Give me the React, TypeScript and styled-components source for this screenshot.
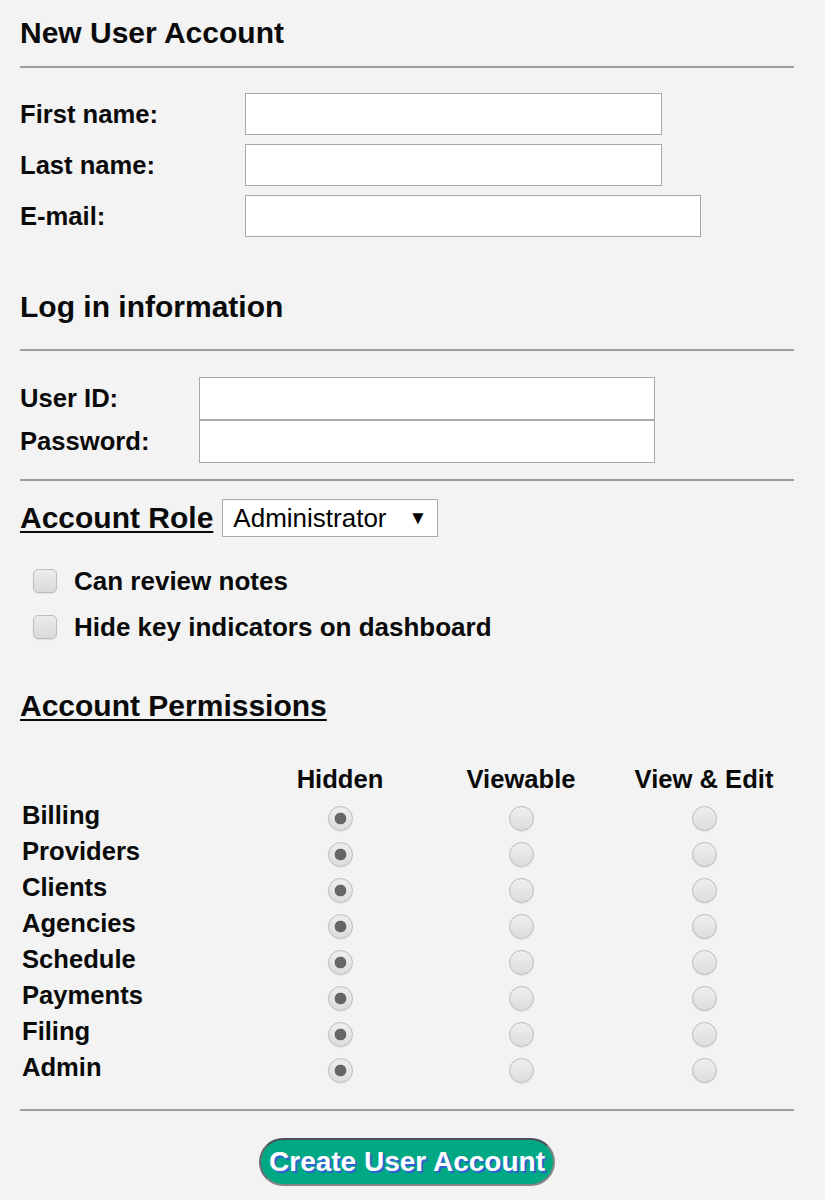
import { Fragment } from "react";
import styled, { createGlobalStyle } from "styled-components";

const GlobalStyle = createGlobalStyle`
  html, body {
    margin: 0;
    padding: 0;
    background: #f3f3f3;
  }
  body {
    font-family: "Liberation Sans", Arial, sans-serif;
    color: #0a0a0a;
  }
`;

const Page = styled.div`
  width: 774px;
  margin-left: 20px;
  display: flex;
  flex-direction: column;
`;

const Heading = styled.h2<{ $top: number }>`
  margin: ${(p) => p.$top}px 0 0;
  font-size: 30px;
  line-height: 34px;
  font-weight: bold;
`;

const UnderlinedTitle = styled.h3`
  margin: 0;
  font-size: 30px;
  line-height: 34px;
  font-weight: bold;
  text-decoration: underline;
  text-underline-offset: 3px;
  text-decoration-thickness: 2px;
  white-space: nowrap;
`;

const Rule = styled.div<{ $top: number }>`
  height: 2px;
  margin-top: ${(p) => p.$top}px;
  background: #9d9d9d;
`;

const FieldGroup = styled.div<{ $top: number; $gap: number }>`
  margin-top: ${(p) => p.$top}px;
  display: flex;
  flex-direction: column;
  gap: ${(p) => p.$gap}px;
`;

const FieldRow = styled.div<{ $labelWidth: number }>`
  display: grid;
  grid-template-columns: ${(p) => p.$labelWidth}px auto;
  align-items: center;
  justify-content: start;
`;

const Label = styled.label`
  font-size: 25.6px;
  font-weight: bold;
`;

const TextInput = styled.input<{ $w: number; $h: number }>`
  box-sizing: border-box;
  width: ${(p) => p.$w}px;
  height: ${(p) => p.$h}px;
  border: 1px solid #a9a9a9;
  background: #fff;
  margin: 0;
  padding: 0 8px;
  font-family: "Liberation Sans", Arial, sans-serif;
  font-size: 22px;
  outline: none;
`;

const RoleRow = styled.div`
  margin-top: 18px;
  display: flex;
  align-items: center;
  gap: 9px;
`;

const SelectWrap = styled.div`
  position: relative;
  width: 216px;
  height: 38px;
`;

const Select = styled.select`
  appearance: none;
  box-sizing: border-box;
  width: 100%;
  height: 100%;
  border: 1px solid #a9a9a9;
  border-radius: 0;
  background: #fff;
  padding: 0 0 0 10px;
  font-family: "Liberation Sans", Arial, sans-serif;
  font-size: 26px;
  color: #000;
  outline: none;
`;

const SelectArrow = styled.span`
  position: absolute;
  right: 11px;
  top: 50%;
  transform: translateY(-50%);
  font-size: 19px;
  pointer-events: none;
  color: #000;
`;

const CheckList = styled.div`
  margin-top: 21px;
  display: flex;
  flex-direction: column;
`;

const CheckRow = styled.label`
  height: 46px;
  display: flex;
  align-items: center;
  gap: 17px;
  padding-left: 13px;
  font-size: 26px;
  font-weight: bold;
`;

const Checkbox = styled.input`
  appearance: none;
  margin: 0;
  width: 24px;
  height: 24px;
  border: 1px solid #bdbdbd;
  border-radius: 5px;
  background: linear-gradient(#ececec, #dadada);
  box-shadow: 0 1px 1px rgba(0, 0, 0, 0.08);
`;

const PermTitleWrap = styled.div`
  margin-top: 39px;
  display: flex;
`;

const PermGrid = styled.div`
  margin: 38px 0 0 2px;
  display: grid;
  grid-template-columns: 228px 180px 182px 184px;
  grid-auto-rows: 36px;
`;

const ColHead = styled.div`
  display: flex;
  align-items: center;
  justify-content: center;
  font-size: 25.6px;
  font-weight: bold;
  white-space: nowrap;
`;

const RowLabel = styled.div`
  display: flex;
  align-items: center;
  font-size: 25.6px;
  font-weight: bold;
`;

const RadioCell = styled.div`
  display: flex;
  justify-content: center;
  padding-top: 9px;
`;

const Radio = styled.input`
  appearance: none;
  margin: 0;
  width: 25px;
  height: 25px;
  border-radius: 50%;
  border: 1px solid #bcbcbc;
  background: linear-gradient(#eeeeee, #dddddd);
  box-shadow: 0 1px 1px rgba(0, 0, 0, 0.06);

  &:checked {
    background: radial-gradient(circle, #666 0 5.5px, transparent 6.2px),
      linear-gradient(#eeeeee, #dddddd);
  }
`;

const ButtonRow = styled.div`
  margin-top: 27px;
  display: flex;
  justify-content: center;
`;

const CreateButton = styled.button`
  box-sizing: border-box;
  height: 48px;
  padding: 0 8px;
  border: 2px solid #858585;
  border-top-color: #4b4f5c;
  border-left-color: #6a6a70;
  border-radius: 24px;
  background: #00a884;
  color: #fff;
  font-family: "Liberation Sans", Arial, sans-serif;
  font-size: 28px;
  font-weight: bold;
  text-shadow: 2px 2px 0 #2d62d4;
  cursor: pointer;
`;

const sections = [
  "Billing",
  "Providers",
  "Clients",
  "Agencies",
  "Schedule",
  "Payments",
  "Filing",
  "Admin",
];

const levels = ["Hidden", "Viewable", "View & Edit"];

export default function App() {
  return (
    <>
      <GlobalStyle />
      <Page>
        <Heading $top={16}>New User Account</Heading>
        <Rule $top={16} />

        <FieldGroup $top={25} $gap={9}>
          <FieldRow $labelWidth={225}>
            <Label>First name:</Label>
            <TextInput $w={417} $h={42} />
          </FieldRow>
          <FieldRow $labelWidth={225}>
            <Label>Last name:</Label>
            <TextInput $w={417} $h={42} />
          </FieldRow>
          <FieldRow $labelWidth={225}>
            <Label>E-mail:</Label>
            <TextInput $w={456} $h={42} />
          </FieldRow>
        </FieldGroup>

        <Heading $top={53}>Log in information</Heading>
        <Rule $top={25} />

        <FieldGroup $top={26} $gap={0}>
          <FieldRow $labelWidth={179}>
            <Label>User ID:</Label>
            <TextInput $w={456} $h={43} />
          </FieldRow>
          <FieldRow $labelWidth={179}>
            <Label>Password:</Label>
            <TextInput $w={456} $h={43} type="password" />
          </FieldRow>
        </FieldGroup>

        <Rule $top={16} />

        <RoleRow>
          <UnderlinedTitle>Account Role</UnderlinedTitle>
          <SelectWrap>
            <Select defaultValue="admin">
              <option value="admin">Administrator</option>
              <option value="staff">Staff</option>
            </Select>
            <SelectArrow>▼</SelectArrow>
          </SelectWrap>
        </RoleRow>

        <CheckList>
          <CheckRow>
            <Checkbox type="checkbox" />
            Can review notes
          </CheckRow>
          <CheckRow>
            <Checkbox type="checkbox" />
            Hide key indicators on dashboard
          </CheckRow>
        </CheckList>

        <PermTitleWrap>
          <UnderlinedTitle>Account Permissions</UnderlinedTitle>
        </PermTitleWrap>

        <PermGrid>
          <div />
          {levels.map((l) => (
            <ColHead key={l}>{l}</ColHead>
          ))}
          {sections.map((s) => (
            <Fragment key={s}>
              <RowLabel>{s}</RowLabel>
              {levels.map((l, i) => (
                <RadioCell key={s + l}>
                  <Radio type="radio" name={s} defaultChecked={i === 0} />
                </RadioCell>
              ))}
            </Fragment>
          ))}
        </PermGrid>

        <Rule $top={24} />

        <ButtonRow>
          <CreateButton>Create User Account</CreateButton>
        </ButtonRow>
      </Page>
    </>
  );
}
